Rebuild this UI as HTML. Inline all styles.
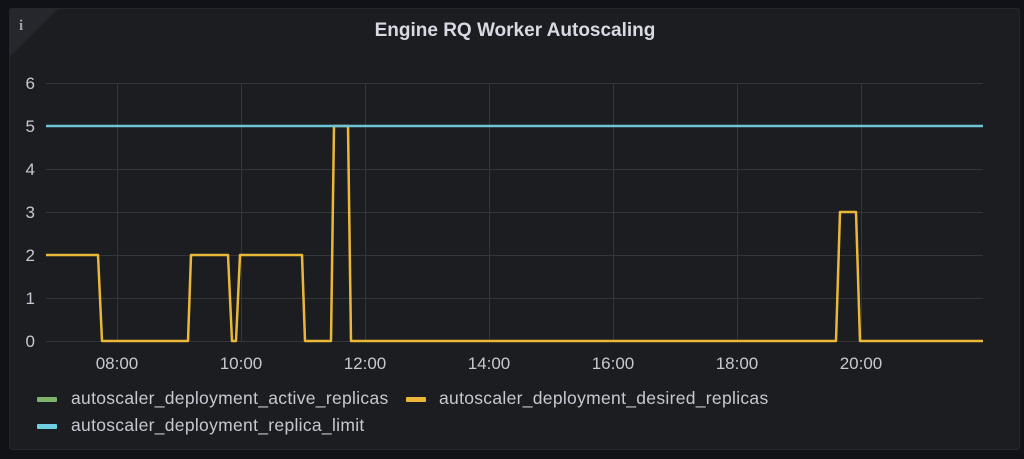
<!DOCTYPE html>
<html><head><meta charset="utf-8"><style>
html,body{margin:0;padding:0;background:#111217;width:1024px;height:459px;overflow:hidden;font-family:"Liberation Sans",sans-serif}
.p{position:absolute;left:9px;top:8px;width:1011px;height:442px;background:#1c1d21;border:1px solid #26272c;border-radius:3px;box-sizing:border-box}
.t{position:absolute;left:0;top:20px;width:1030px;text-align:center;color:#d8d9e3;font-size:19px;font-weight:bold}
.l{position:absolute;color:#c7c8d1;font-size:17.5px;letter-spacing:0.3px;line-height:20px}
.sw{position:absolute;width:20px;height:5px;border-radius:1px}
</style></head><body>
<div class="p"></div>
<svg style="position:absolute;left:0;top:0" width="1024" height="459">
<polygon points="10,9 58,9 10,57" fill="#26272c"/>
<text x="19" y="30" fill="#a0a1aa" font-size="15" font-family="Liberation Serif" font-weight="bold">i</text>
<g stroke="#35363b" stroke-width="1">
<line x1="46" y1="83.5" x2="983" y2="83.5"/><line x1="46" y1="169.5" x2="983" y2="169.5"/><line x1="46" y1="212.5" x2="983" y2="212.5"/><line x1="46" y1="255.5" x2="983" y2="255.5"/><line x1="46" y1="298.5" x2="983" y2="298.5"/><line x1="46" y1="341.5" x2="983" y2="341.5"/>
<line x1="117.5" y1="83" x2="117.5" y2="341"/><line x1="241.5" y1="83" x2="241.5" y2="341"/><line x1="365.5" y1="83" x2="365.5" y2="341"/><line x1="489.5" y1="83" x2="489.5" y2="341"/><line x1="613.5" y1="83" x2="613.5" y2="341"/><line x1="737.5" y1="83" x2="737.5" y2="341"/><line x1="861.5" y1="83" x2="861.5" y2="341"/>
</g>
<polyline fill="none" stroke="#eab839" stroke-width="2.5" stroke-linejoin="round" points="46,255 98,255 102,341 188,341 191,255 228,255 232,341 236,341 240,255 302,255 305,341 331,341 334,126 348,126 351,341 836,341 840,212 856,212 860,341 983,341"/>
<line x1="46" y1="126" x2="983" y2="126" stroke="#6ec5d6" stroke-width="2.5"/>
<g fill="#c7c8d1" font-size="17" text-anchor="end">
<text x="35" y="89">6</text><text x="35" y="132">5</text><text x="35" y="175">4</text><text x="35" y="218">3</text><text x="35" y="261">2</text><text x="35" y="304">1</text><text x="35" y="347">0</text>
</g>
<g fill="#c7c8d1" font-size="17" text-anchor="middle">
<text x="117" y="369">08:00</text><text x="241" y="369">10:00</text><text x="365" y="369">12:00</text><text x="489" y="369">14:00</text><text x="613" y="369">16:00</text><text x="737" y="369">18:00</text><text x="861" y="369">20:00</text>
</g>
</svg>
<div class="t">Engine RQ Worker Autoscaling</div>
<div class="sw" style="left:37px;top:397px;background:#7eb26d"></div>
<div class="l" style="left:71px;top:388px">autoscaler_deployment_active_replicas</div>
<div class="sw" style="left:406px;top:397px;background:#eab839"></div>
<div class="l" style="left:439px;top:388px">autoscaler_deployment_desired_replicas</div>
<div class="sw" style="left:37px;top:424px;background:#6ed0e0"></div>
<div class="l" style="left:71px;top:415px">autoscaler_deployment_replica_limit</div>
</body></html>
